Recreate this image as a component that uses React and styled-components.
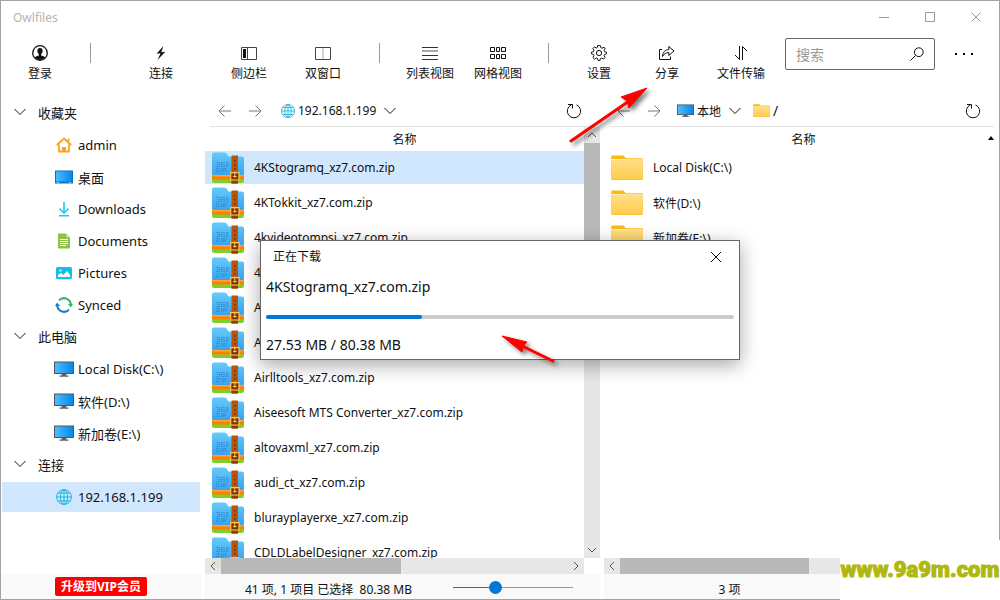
import React, { useState } from 'react';
import styled, { createGlobalStyle, css } from 'styled-components';


const GlobalStyle = createGlobalStyle`
    * {
        box-sizing: border-box;
    }

    body {
        margin: 0;
        background: white;
        color: #111;
        font-family: "Noto Sans", "Noto Sans CJK SC", sans-serif;
        font-size: 12px;
        overflow: hidden;
    }

    button {
        padding: 0;
        border: none;
        background: none;
        color: inherit;
        font: inherit;
    }

    svg {
        display: block;
        flex: none;
    }
`;

const Window = styled.div`
    position: relative;
    display: flex;
    flex-direction: column;
    height: 100vh;
    border: 1px solid #a3a3a3;
`;

const TitleBar = styled.header`
    display: flex;
    align-items: center;
    height: 32px;
    padding-left: 12px;
    color: #b5b5b5;
`;

const AppName = styled.span`
    flex: 1;
`;

const WindowButton = styled.button`
    display: flex;
    align-items: center;
    justify-content: center;
    width: 46px;
    height: 32px;
    color: #999;
`;

const Toolbar = styled.nav`
    display: flex;
    align-items: flex-start;
    height: 62px;
    padding: 5px 6px 0 5px;
`;

const ToolButton = styled.button`
    display: flex;
    flex-direction: column;
    align-items: center;
    gap: 4px;
    flex: none;
    width: ${(props) => props.$width || 68}px;
    padding-top: 7px;
    line-height: 18px;
    white-space: nowrap;
`;

const Separator = styled.span`
    width: 1px;
    height: 20px;
    margin: 5px 16px 0;
    background: #999;
`;

const SearchBox = styled.label`
    display: flex;
    align-items: center;
    width: 150px;
    height: 32px;
    margin-left: auto;
    padding: 0 10px;
    border: 1px solid #666;
    border-radius: 2px;
`;

const SearchInput = styled.input`
    flex: 1;
    min-width: 0;
    padding: 0;
    border: none;
    outline: none;
    background: none;
    font: inherit;
    font-size: 14px;

    &::placeholder {
        color: #999;
    }
`;

const MoreButton = styled.button`
    display: flex;
    align-items: center;
    justify-content: center;
    width: 58px;
    height: 32px;
`;

const Body = styled.div`
    display: grid;
    grid-template-columns: 200px 1fr 1fr;
    gap: 4px;
    flex: 1;
    min-height: 0;
`;

const Column = styled.section`
    display: flex;
    flex-direction: column;
    min-width: 0;
    min-height: 0;
`;

const SideList = styled.div`
    display: flex;
    flex-direction: column;
    flex: 1;
    padding: 1px 1px 0;
    font-size: 13px;
`;

const SideHeader = styled.button`
    display: flex;
    align-items: center;
    gap: 12px;
    height: 32px;
    padding-left: 12px;
`;

const SideItem = styled.button`
    display: flex;
    align-items: center;
    gap: 4px;
    height: 30px;
    margin: 2px 0 0;
    padding-left: 52px;
    white-space: nowrap;

    ${(props) => props.$active &&
    css`
        background: #d0e7fd;
    `}
`;

const SideIcon = styled.span`
    display: flex;
    justify-content: center;
    width: 20px;
`;

const Footer = styled.footer`
    display: flex;
    align-items: center;
    flex: none;
    height: 25px;
    padding: 5px 27px 0 40px;
    background: #f9f9f9;
    white-space: pre;

    ${(props) => props.$center &&
    css`
        justify-content: center;
        padding: 5px 144px 0 0;
    `}
`;

const VipFooter = styled(Footer)`
    justify-content: center;
    padding: 0;
`;

const VipButton = styled.button`
    height: 19px;
    padding: 0 6px;
    border-radius: 2px;
    background: #f00;
    color: white;
    font-weight: 700;
    line-height: 19px;
`;

const ZoomSlider = styled.input`
    appearance: none;
    width: 120px;
    height: 14px;
    margin: 0 0 3px auto;
    background: none;

    &::-webkit-slider-runnable-track {
        height: 1px;
        background: linear-gradient(to right, #0078d7 35%, #999 35%);
    }

    &::-webkit-slider-thumb {
        appearance: none;
        width: 13px;
        height: 13px;
        margin-top: -6px;
        border-radius: 50%;
        background: #0078d7;
    }
`;

const AddressBar = styled.div`
    display: flex;
    align-items: center;
    flex: none;
    height: 32px;
    margin: 0 5px;
    padding: 0 13px 0 8px;
    border-bottom: 1px solid #e5e5e5;
`;

const NavButton = styled.button`
    width: 30px;
    color: #777;
`;

const Place = styled.button`
    display: flex;
    align-items: center;
    gap: 3px;
    margin-left: ${(props) => props.$gap || 0}px;
    font-size: ${(props) => (props.$large ? 14 : 12)}px;
`;

const ReloadButton = styled.button`
    margin-left: auto;
`;

const PaneBody = styled.div`
    display: flex;
    flex: 1;
    min-height: 0;
`;

const Listing = styled.div`
    display: flex;
    flex-direction: column;
    flex: 1;
    min-width: 0;
    overflow: hidden;
`;

const ColumnTitle = styled.button`
    flex: none;
    height: 23px;
    padding-left: 20px;
    text-align: center;
`;

const FileRow = styled.div`
    display: flex;
    align-items: center;
    gap: 10px;
    flex: none;
    height: 33px;
    margin: 1px 0;
    padding-left: 7px;
    white-space: nowrap;

    ${(props) => props.$selected &&
    css`
        background: #d0e7fd;
    `}
`;

const VScroll = styled.div`
    display: flex;
    flex-direction: column;
    flex: none;
    width: 16px;
    margin-bottom: 16px;
    background: #e6e6e6;
    color: #555;
`;

/* lies over the end of the list, which shows faintly through it */
const HScroll = styled.div`
    position: relative;
    display: flex;
    flex: none;
    height: 16px;
    margin: -16px ${(props) => props.$inset || 0}px 0 0;
    background: rgba(229, 229, 229, 0.92);
    color: #555;
`;

const ScrollButton = styled.button`
    display: flex;
    align-items: center;
    justify-content: center;
    flex: none;
    width: 16px;
    height: 16px;
`;

const Track = styled.div`
    display: flex;
    flex-direction: ${(props) => (props.$vertical ? 'column' : 'row')};
    flex: 1;
`;

const Thumb = styled.div`
    flex: 0 0 ${(props) => props.$size}%;
    background: rgba(182, 182, 182, 0.95);
`;

const SortMark = styled.div`
    flex: none;
    width: 16px;
    padding: 9px 0 0 5px;
`;

const Dialog = styled.div`
    position: absolute;
    top: 50%;
    left: 50%;
    width: 480px;
    height: 120px;
    padding: 0 5px;
    transform: translate(-50%, -50%);
    border: 1px solid #666;
    background: white;
    box-shadow: 0 5px 18px rgba(0, 0, 0, 0.35);
    font-size: 14px;
    line-height: 20px;
`;

const DialogTitle = styled.div`
    display: flex;
    align-items: center;
    justify-content: space-between;
    height: 32px;
    padding: 0 12px 0 7px;
    font-size: 12px;
`;

const DialogText = styled.div`
    padding: 4px 0 18px;
`;

const DownloadBar = styled.progress`
    appearance: none;
    display: block;
    width: 100%;
    height: 4px;
    margin-bottom: 16px;

    &::-webkit-progress-bar {
        border-radius: 2px;
        background: #ccc;
    }

    &::-webkit-progress-value {
        border-radius: 2px;
        background: #0078d7;
    }
`;

const Pointer = styled.svg`
    position: absolute;
    top: ${(props) => props.$top}px;
    left: ${(props) => props.$left}px;
    overflow: visible;
    filter: drop-shadow(3px 3px 2px rgba(0, 0, 0, 0.5));
    pointer-events: none;
`;

const SiteMark = styled.div`
    position: absolute;
    right: -1px;
    bottom: -1px;
    width: 160px;
    height: 60px;
    background: white;
    color: #b0b80e;
    font-family: Roboto, sans-serif;
    font-size: 22px;
    font-weight: 900;
    line-height: 60px;
    text-align: center;
    white-space: nowrap;
    -webkit-text-stroke: 1px #b0b80e;
`;


const Line = ({ d, w = 16, h = 16, width = 1, children }) => (
    <svg width={w} height={h} viewBox={`0 0 ${w} ${h}`} fill="none" stroke="currentColor" strokeWidth={width}>
        {d && <path d={d} />}
        {children}
    </svg>
);

const Chevron = () => <Line w={12} h={8} d="M0.5 1L6 6.5L11.5 1" />;
const Cross = () => <Line w={12} h={12} d="M1 1L11 11M11 1L1 11" />;

const toolIcons = {
    login: (
        <Line>
            <circle cx="8" cy="8" r="7.3" strokeWidth="1.3" />
            <path d="M8 3C6.2 3 5.3 4.2 5.4 6C5.5 7.5 6.1 8.5 6.8 9V10.4L2.6 12C4.2 14.2 6 15 8 15S11.8 14.2 13.4 12L9.2 10.4V9C9.9 8.5 10.5 7.5 10.6 6C10.7 4.2 9.8 3 8 3Z" fill="currentColor" stroke="none" />
        </Line>
    ),
    connect: (
        <Line>
            <path d="M10.5 1L3.5 8.7L7.6 8.3L4.5 15L12.3 6.8L8.2 7.2Z" fill="currentColor" stroke="none" />
        </Line>
    ),
    sidebar: (
        <Line>
            <path d="M0.5 2.5H15.5V14.5H0.5ZM6.5 2.5V14.5" stroke="#444" />
            <path d="M2 4H5V13H2Z" fill="currentColor" stroke="none" />
        </Line>
    ),
    dual: (
        <Line>
            <path d="M0.5 2.5H15.5V14.5H0.5Z" stroke="#444" />
            <path d="M8 3V14" stroke="#aaa" />
        </Line>
    ),
    list: (
        <Line>
            <path d="M0 2.5H16M0 10.5H16M0 14.5H16" stroke="#333" />
            <path d="M0 6H16" stroke="#aaa" strokeWidth="2" />
        </Line>
    ),
    grid: <Line d="M0.5 2.5H4.5V6.5H0.5ZM6.5 2.5H9.5V6.5H6.5ZM11.5 2.5H15.5V6.5H11.5ZM0.5 9.5H4.5V13.5H0.5ZM6.5 9.5H9.5V13.5H6.5ZM11.5 9.5H15.5V13.5H11.5Z" />,
    settings: (
        <Line>
            <path d="M6.7 0.6H9.3L9.8 2.6L11.2 3.2L13 2.1L14.2 3.9L13.1 5.4L13.6 6.7L15.5 7.2V8.9L13.6 9.4L13 10.8L14.1 12.5L12.5 14.1L10.8 13L9.4 13.6L8.9 15.5H7.1L6.6 13.6L5.2 13L3.5 14.1L1.9 12.5L3 10.8L2.4 9.4L0.5 8.9V7.1L2.4 6.6L3 5.2L1.9 3.5L3.5 1.9L5.2 3L6.3 2.5Z" />
            <circle cx="8" cy="8" r="2.6" />
        </Line>
    ),
    share: <Line d="M3 4.5H0.5V14.5H11.5V11.5M3.5 11.5C3.8 7 6 4.8 9.8 4.6V1.5L15 6L9.8 10.5V7.5C7 7.6 5 8.6 3.5 11.5Z" />,
    transfer: <Line d="M6.5 1V14.5L2 10M9.5 15V1.5L14 6" />,
};

const Tool = ({ icon, label, width }) => (
    <ToolButton $width={width}>
        {toolIcons[icon]}
        {label}
    </ToolButton>
);

const Globe = ({ size = 16 }) => (
    <svg width={size} height={size} viewBox="0 0 16 16" fill="none" stroke="#1ab4e0">
        <circle cx="8" cy="8" r="7.4" />
        <ellipse cx="8" cy="8" rx="3.6" ry="7.4" />
        <path d="M8 0.6V15.4M0.6 8H15.4M2 4H14M2 12H14" />
    </svg>
);

const Monitor = ({ width = 20 }) => (
    <svg width={width} height={width * 0.8} viewBox="0 0 20 16">
        <defs>
            <linearGradient id="screen">
                <stop stopColor="#4dbdff" />
                <stop offset="1" stopColor="#0688e8" />
            </linearGradient>
        </defs>
        <path d="M0 0.5H20V13H0Z" fill="#555" />
        <path d="M1 1.5H19V12H1Z" fill="url(#screen)" />
        <path d="M7.5 13H12.5V14.5H14.5V15.7H5.5V14.5H7.5Z" fill="#666" />
    </svg>
);

const Folder = ({ width = 32 }) => (
    <svg width={width} height={width * 0.8} viewBox="0 0 32 26">
        <defs>
            <linearGradient id="folder" x2="0" y2="1">
                <stop stopColor="#ffe08a" />
                <stop offset="1" stopColor="#ffcc4d" />
            </linearGradient>
        </defs>
        <path d="M0 1Q0 0.5 1 0.5H12.5L14.5 3H31Q32 3 32 4V25H0Z" fill="#fdb813" />
        <path d="M0 5H13.5L15 3.5H31Q32 3.5 32 4.5V24.3Q32 25 31 25H1Q0 25 0 24.3Z" fill="url(#folder)" />
        <path d="M0 4.6H14" stroke="#fff4d0" />
        <path d="M1 25.3H31" stroke="#f5b21c" />
    </svg>
);

const ZipIcon = () => (
    <svg width="32" height="32" viewBox="0 0 32 32">
        <defs>
            <linearGradient id="zip" x2="0" y2="1">
                <stop stopColor="#66cbf8" />
                <stop offset="1" stopColor="#3aa2ee" />
            </linearGradient>
        </defs>
        <path d="M0 24H32V29Q32 31 30 31H2Q0 31 0 29Z" fill="#7fcf2c" />
        <path d="M0 20H32V25Q32 27.5 30 27.5H2Q0 27.5 0 25Z" fill="#ff7e00" />
        <path d="M0 21H32V22.5Q32 24.5 30 24.5H2Q0 24.5 0 22.5Z" fill="#ffa53a" />
        <path d="M0 2.5Q0 0.5 2 0.5H12.5Q14 0.5 15 2L16.5 4.5H30Q32 4.5 32 6.5V21Q32 23 30 23H2Q0 23 0 21Z" fill="url(#zip)" />
        <path d="M4 10.5H7.5V14.5H4M5 12.5H7.5M13 10.5H9.5V14.5H12.5V12.5H9.5M14.5 10.5H16V14.5H14.5ZM4 16.5H7.5L4 19.5H7.5M9.5 16V20M11.5 20V16.5H14V18.5H11.5" fill="none" stroke="#2380ca" strokeWidth="0.8" opacity="0.65" />
        <path d="M19.5 3.5H26V31.5H19.5Z" fill="#b95508" />
        <path d="M22.8 8V19" stroke="#7a3000" strokeWidth="1.6" strokeDasharray="1.5 2.5" />
        <path d="M19.5 28.5H26V31.5H19.5Z" fill="#943b00" />
        <path d="M18.7 20.7H27V28H18.7Z" fill="#7a3708" stroke="#ffc65c" strokeWidth="1.2" />
        <path d="M22.8 19.5V25.5M21 24.5H24.7" stroke="#ffc65c" />
    </svg>
);

const sideIcons = {
    home: (
        <svg width="16" height="16" viewBox="0 0 16 16">
            <path d="M0.8 8L8 1.5L15.2 8" fill="none" stroke="#ffa21f" strokeWidth="2" />
            <path d="M3 7.5V14.5H13V7.5M12.5 4V1.5" fill="none" stroke="#ffa21f" strokeWidth="1.8" />
            <path d="M6 10H10V15H6Z" fill="#ffa21f" />
        </svg>
    ),
    desktop: (
        <svg width="18" height="14" viewBox="0 0 18 14">
            <path d="M0 0.5H18V13.5H0Z" fill="#0873c4" />
            <path d="M1 1.5H17V11.5H1Z" fill="url(#screen)" />
            <path d="M2 12.5H4M14 12.5H16" stroke="#8cd0ff" />
        </svg>
    ),
    download: (
        <svg width="16" height="16" viewBox="0 0 16 16" fill="none" stroke="#20c8ee" strokeWidth="1.6">
            <path d="M8 1V11.5M3.5 7.5L8 12L12.5 7.5M3 14.7H13" />
        </svg>
    ),
    document: (
        <svg width="16" height="16" viewBox="0 0 16 16">
            <path d="M2 0.5H10L14 4.5V15.5H2Z" fill="#8bc34a" />
            <path d="M10 0.5V4.5H14" fill="#c0e08f" />
            <path d="M4 6.5H12M4 8.5H12M4 10.5H12M4 12.5H10" stroke="white" />
        </svg>
    ),
    picture: (
        <svg width="16" height="14" viewBox="0 0 16 14">
            <rect y="1" width="16" height="12" rx="1.5" fill="#10bfee" />
            <path d="M2 11V9L5 7L7.5 9L11 5L14 9V11Z" fill="white" />
            <circle cx="4.5" cy="4.5" r="1" fill="white" />
        </svg>
    ),
    sync: (
        <svg width="16" height="16" viewBox="0 0 16 16" fill="none" strokeWidth="2" overflow="visible">
            <path d="M3 3.4A6.8 6.8 0 0 1 14.8 8" stroke="#35b56a" />
            <path d="M12 7H17L14.8 10.5Z" fill="#35b56a" />
            <path d="M13 12.6A6.8 6.8 0 0 1 1.2 8" stroke="#0c7bc4" />
            <path d="M-1 9L1.2 5.5L4 9Z" fill="#0c7bc4" />
        </svg>
    ),
    monitor: <Monitor />,
    globe: <Globe />,
};

const sections = [
    {
        title: '收藏夹',
        items: [
            ['home', 'admin'],
            ['desktop', '桌面'],
            ['download', 'Downloads'],
            ['document', 'Documents'],
            ['picture', 'Pictures'],
            ['sync', 'Synced'],
        ],
    },
    {
        title: '此电脑',
        items: [
            ['monitor', 'Local Disk(C:\\)'],
            ['monitor', '软件(D:\\)'],
            ['monitor', '新加卷(E:\\)'],
        ],
    },
    { title: '连接', items: [['globe', '192.168.1.199']] },
];

const files = [
    '4KStogramq_xz7.com.zip',
    '4KTokkit_xz7.com.zip',
    '4kvideotompsi_xz7.com.zip',
    '4',
    'A',
    'A',
    'Airlltools_xz7.com.zip',
    'Aiseesoft MTS Converter_xz7.com.zip',
    'altovaxml_xz7.com.zip',
    'audi_ct_xz7.com.zip',
    'blurayplayerxe_xz7.com.zip',
    'CDLDLabelDesigner_xz7.com.zip',
];

const drives = ['Local Disk(C:\\)', '软件(D:\\)', '新加卷(E:\\)'];

const NavArrows = () => (
    <>
        <NavButton aria-label="Back"><Line w={14} h={12} d="M13 6H1M6.5 0.5L1 6L6.5 11.5" /></NavButton>
        <NavButton aria-label="Forward"><Line w={14} h={12} d="M1 6H13M7.5 0.5L13 6L7.5 11.5" /></NavButton>
    </>
);

const Reload = () => (
    <ReloadButton aria-label="Reload">
        <Line d="M10.5 1.9A6.7 6.7 0 1 1 5.5 1.9M2 1.5H6.5V5.5" />
    </ReloadButton>
);

const HorizontalScroll = ({ size, inset }) => (
    <HScroll $inset={inset}>
        <ScrollButton aria-label="Left"><Line w={6} h={10} d="M5 1L1 5L5 9" /></ScrollButton>
        <Track><Thumb $size={size} /></Track>
        <ScrollButton aria-label="Right"><Line w={6} h={10} d="M1 1L5 5L1 9" /></ScrollButton>
    </HScroll>
);

const App = () => {
    const [selected, setSelected] = useState(0);
    const [zoom, setZoom] = useState(34);

    return (
        <Window>
            <GlobalStyle />
            <TitleBar>
                <AppName>Owlfiles</AppName>
                <WindowButton aria-label="Minimize"><Line w={10} h={10} d="M0 5.5H10" /></WindowButton>
                <WindowButton aria-label="Maximize"><Line w={10} h={10} d="M0.5 0.5H9.5V9.5H0.5Z" /></WindowButton>
                <WindowButton aria-label="Close"><Line w={10} h={10} d="M0.5 0.5L9.5 9.5M9.5 0.5L0.5 9.5" /></WindowButton>
            </TitleBar>

            <Toolbar>
                <Tool icon="login" label="登录" />
                <Separator />
                <Tool icon="connect" label="连接" width={108} />
                <Tool icon="sidebar" label="侧边栏" />
                <Tool icon="dual" label="双窗口" width={80} />
                <Separator />
                <Tool icon="list" label="列表视图" />
                <Tool icon="grid" label="网格视图" />
                <Separator />
                <Tool icon="settings" label="设置" />
                <Tool icon="share" label="分享" />
                <Tool icon="transfer" label="文件传输" width={80} />
                <SearchBox>
                    <SearchInput placeholder="搜索" aria-label="搜索" />
                    <Line w={14} h={14} d="M0.5 13.5L5.5 8.5">
                        <circle cx="8.8" cy="5.2" r="4.4" />
                    </Line>
                </SearchBox>
                <MoreButton aria-label="More">
                    <svg width="18" height="4" viewBox="0 0 18 4">
                        <path d="M0 1H2V3H0ZM8 1H10V3H8ZM16 1H18V3H16Z" />
                    </svg>
                </MoreButton>
            </Toolbar>

            <Body>
                <Column>
                    <SideList>
                        {sections.map((section) => (
                            <React.Fragment key={section.title}>
                                <SideHeader><Chevron />{section.title}</SideHeader>
                                {section.items.map(([icon, label]) => (
                                    <SideItem key={label} $active={icon === 'globe'}>
                                        <SideIcon>{sideIcons[icon]}</SideIcon>
                                        {label}
                                    </SideItem>
                                ))}
                            </React.Fragment>
                        ))}
                    </SideList>
                    <VipFooter>
                        <VipButton>升级到VIP会员</VipButton>
                    </VipFooter>
                </Column>

                <Column>
                    <AddressBar>
                        <NavArrows />
                        <Place $gap={3}><Globe size={14} />192.168.1.199</Place>
                        <Place $gap={8} aria-label="Recent"><Chevron /></Place>
                        <Reload />
                    </AddressBar>
                    <PaneBody>
                        <Listing>
                            <ColumnTitle>名称</ColumnTitle>
                            {files.map((name, i) => (
                                <FileRow key={i} $selected={i === selected} onClick={() => setSelected(i)}>
                                    <ZipIcon />
                                    {name}
                                </FileRow>
                            ))}
                        </Listing>
                        <VScroll>
                            <ScrollButton aria-label="Up"><Line w={10} h={6} d="M1 5L5 1L9 5" /></ScrollButton>
                            <Track $vertical><Thumb $size={50} /></Track>
                            <ScrollButton aria-label="Down"><Line w={10} h={6} d="M1 1L5 5L9 1" /></ScrollButton>
                        </VScroll>
                    </PaneBody>
                    <HorizontalScroll size={52} inset={16} />
                    <Footer>
                        {'41 项, 1 项目 已选择  80.38 MB'}
                        <ZoomSlider
                            type="range"
                            aria-label="Icon size"
                            value={zoom}
                            onChange={(e) => setZoom(e.target.value)}
                        />
                    </Footer>
                </Column>

                <Column>
                    <AddressBar>
                        <NavArrows />
                        <Place><Monitor width={17} />本地</Place>
                        <Place $gap={8} aria-label="Recent"><Chevron /></Place>
                        <Place $gap={12} $large><Folder width={17} />/</Place>
                        <Reload />
                    </AddressBar>
                    <PaneBody>
                        <Listing>
                            <ColumnTitle>名称</ColumnTitle>
                            {drives.map((name) => (
                                <FileRow key={name}>
                                    <Folder />
                                    {name}
                                </FileRow>
                            ))}
                        </Listing>
                        <SortMark>
                            <svg width="6" height="4" viewBox="0 0 6 4"><path d="M0 4L3 0L6 4Z" /></svg>
                        </SortMark>
                    </PaneBody>
                    <HorizontalScroll size={52} />
                    <Footer $center>3 项</Footer>
                </Column>
            </Body>

            <Dialog role="dialog" aria-label="正在下载">
                <DialogTitle>
                    正在下载
                    <button aria-label="Close"><Cross /></button>
                </DialogTitle>
                <DialogText>4KStogramq_xz7.com.zip</DialogText>
                <DownloadBar value={33.3} max={100} />
                27.53 MB / 80.38 MB
            </Dialog>

            <Pointer $top={86} $left={567} width="82" height="58" viewBox="568 87 82 58">
                <path d="M571 141L632 99" stroke="#f00" strokeWidth="3" strokeLinecap="round" />
                <path d="M647 88L621 97L627 101L629 108Z" fill="#f00" stroke="#f00" strokeLinejoin="round" />
            </Pointer>
            <Pointer $top={331} $left={498} width="60" height="36" viewBox="499 332 60 36">
                <path d="M553 361L518 344" stroke="#f00" strokeWidth="3" strokeLinecap="round" />
                <path d="M502 336L527 342L523 346L522 352Z" fill="#f00" stroke="#f00" strokeLinejoin="round" />
            </Pointer>
            <SiteMark>www.9a9m.com</SiteMark>
        </Window>
    );
};

export default App;
